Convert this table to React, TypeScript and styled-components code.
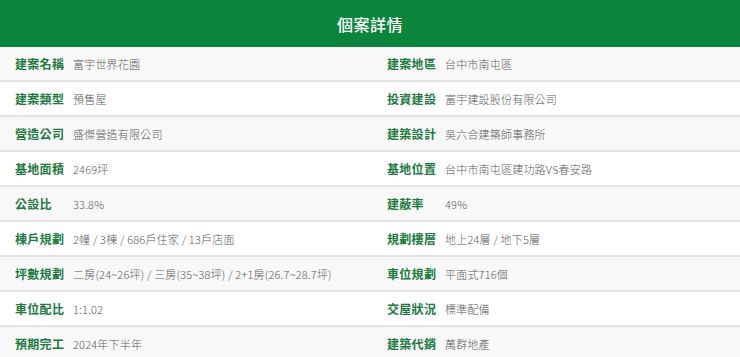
import React from "react";
import styled, { createGlobalStyle } from "styled-components";

const GlobalStyle = createGlobalStyle`
  body {
    margin: 0;
    background: #ffffff;
    font-family: "Noto Sans CJK TC", "Noto Sans", sans-serif;
  }
`;

const rows: [string, string, string, string][] = [
  ["建案名稱", "富宇世界花園", "建案地區", "台中市南屯區"],
  ["建案類型", "預售屋", "投資建設", "富宇建設股份有限公司"],
  ["營造公司", "盛傑營造有限公司", "建築設計", "吳六合建築師事務所"],
  ["基地面積", "2469坪", "基地位置", "台中市南屯區建功路VS春安路"],
  ["公設比", "33.8%", "建蔽率", "49%"],
  ["棟戶規劃", "2幢 / 3棟 / 686戶住家 / 13戶店面", "規劃樓層", "地上24層 / 地下5層"],
  ["坪數規劃", "二房(24~26坪) / 三房(35~38坪) / 2+1房(26.7~28.7坪)", "車位規劃", "平面式716個"],
  ["車位配比", "1:1.02", "交屋狀況", "標準配備"],
  ["預期完工", "2024年下半年", "建築代銷", "萬群地產"],
];

function App() {
  return (
    <>
      <GlobalStyle />
      <DetailStyled>
        <h2 className="title">個案詳情</h2>
        {rows.map((r, i) => (
          <Row key={r[0]} $striped={i % 2 === 0}>
            <div className="cell">
              <span className="label">{r[0]}</span>
              <span className="value">{r[1]}</span>
            </div>
            <div className="cell">
              <span className="label">{r[2]}</span>
              <span className="value">{r[3]}</span>
            </div>
          </Row>
        ))}
      </DetailStyled>
    </>
  );
}

const DetailStyled = styled.div`
  width: 740px;

  .title {
    margin: 0;
    height: 47px;
    display: flex;
    align-items: center;
    justify-content: center;
    background-color: #0b853c;
    color: #fff;
    font-size: 16px;
    font-weight: 500;
    letter-spacing: 0.5px;
  }
`;

const Row = styled.div<{ $striped: boolean }>`
  display: grid;
  grid-template-columns: 372px 1fr;
  height: 33px;
  border-bottom: 2px solid #e4e4e4;
  background-color: ${(p) => (p.$striped ? "#f8f8f8" : "#ffffff")};

  .cell {
    display: flex;
    align-items: center;
    padding-left: 15px;
  }

  .label {
    width: 58px;
    flex-shrink: 0;
    font-size: 12px;
    font-weight: bold;
    letter-spacing: 0.3px;
    color: #1b7a3e;
  }

  .value {
    font-size: 11px;
    font-weight: 300;
    color: #5a5a5a;
    letter-spacing: 0.2px;
    white-space: nowrap;
  }
`;

export default App;
